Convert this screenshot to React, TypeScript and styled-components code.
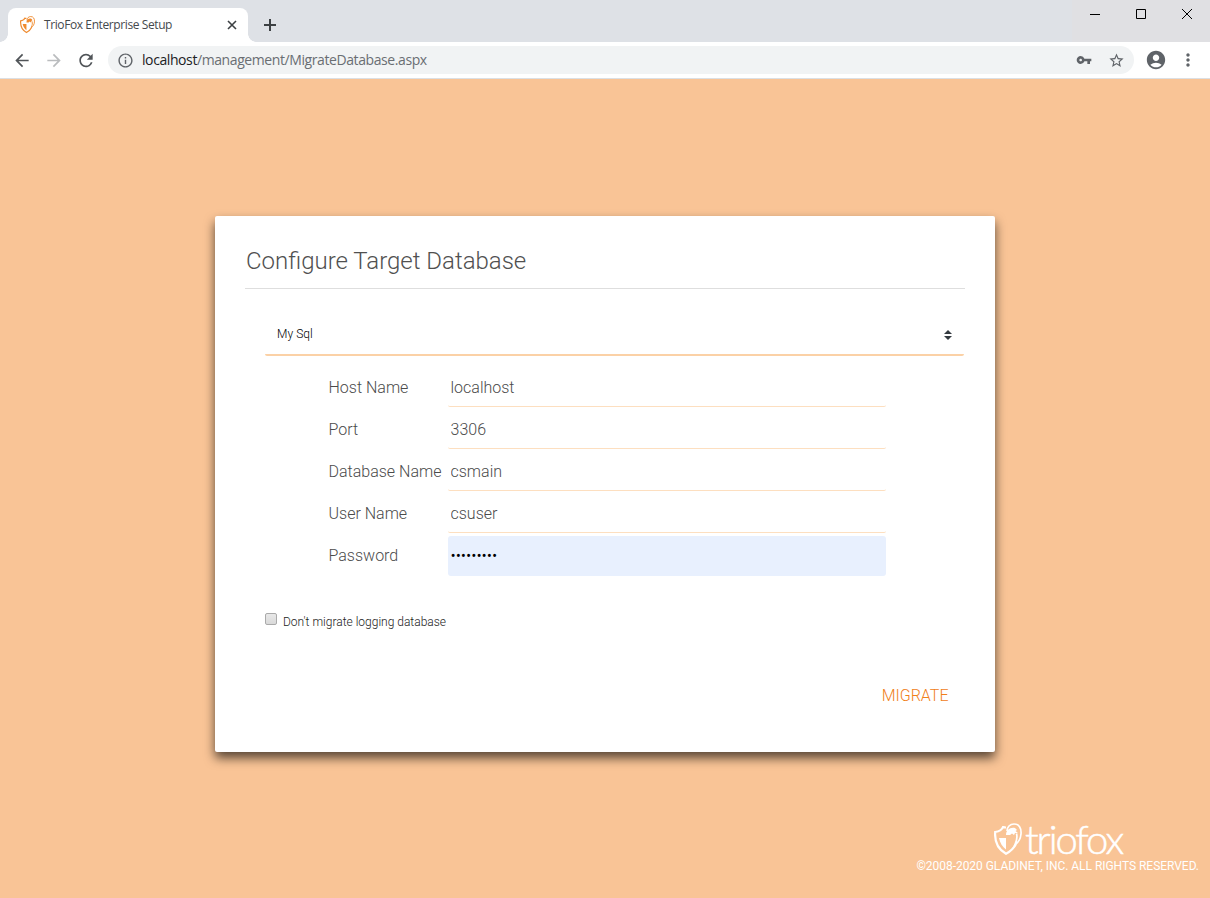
import React from 'react';
import styled, { createGlobalStyle } from 'styled-components';
import {
  MdArrowBack,
  MdArrowForward,
  MdRefresh,
  MdInfoOutline,
  MdVpnKey,
  MdStarBorder,
  MdAccountCircle,
  MdMoreVert,
} from 'react-icons/md';

const GlobalStyle = createGlobalStyle`
  *, *::before, *::after { box-sizing: border-box; }
  html, body { margin: 0; padding: 0; }
  body { font-family: Roboto, sans-serif; overflow: hidden; }
`;

const Window = styled.div`
  display: flex;
  flex-direction: column;
  width: 1210px;
  height: 898px;
  background: #f9c496;
`;

const TabStrip = styled.header`
  display: flex;
  height: 42px;
  padding-left: 8px;
  background: #dee1e6;
`;

const Tab = styled.div`
  position: relative;
  display: flex;
  align-items: center;
  width: 240px;
  height: 34px;
  margin-top: 8px;
  padding: 0 10px 0 12px;
  background: #fff;
  border-radius: 8px 8px 0 0;

  &::before,
  &::after {
    content: '';
    position: absolute;
    bottom: 0;
    width: 8px;
    height: 8px;
  }
  &::before {
    left: -8px;
    background: radial-gradient(circle at 0 0, transparent 7.5px, #fff 8px);
  }
  &::after {
    right: -8px;
    background: radial-gradient(circle at 100% 0, transparent 7.5px, #fff 8px);
  }
`;

const TabTitle = styled.span`
  flex: 1;
  margin-left: 9px;
  font: 400 12px/16px 'Open Sans', sans-serif;
  letter-spacing: -0.4px;
  color: #45494d;
  white-space: nowrap;
`;

const NewTab = styled.div`
  display: flex;
  align-items: center;
  margin: 8px 0 0 16px;
`;

const WindowControls = styled.div`
  display: flex;
  align-items: flex-start;
  width: 138px;
  height: 42px;
  margin-left: auto;
  background: #e0e0e3;
`;

const ControlButton = styled.div`
  display: flex;
  align-items: center;
  justify-content: center;
  width: 46px;
  height: 28px;
`;

const Toolbar = styled.nav`
  display: flex;
  align-items: center;
  height: 37px;
  padding: 0 12px;
  background: #fff;
  border-bottom: 1px solid #dcdfe3;
  color: #5f6368;
`;

const NavIcon = styled.span<{ $disabled?: boolean }>`
  display: flex;
  width: 20px;
  margin-right: 12px;
  color: ${(p) => (p.$disabled ? '#babcbe' : '#505458')};
`;

const AddressBar = styled.div`
  display: flex;
  align-items: center;
  width: 1026px;
  height: 28px;
  padding: 0 9px;
  border-radius: 14px;
  background: #f1f3f4;
`;

const Url = styled.span`
  flex: 1;
  margin-left: 8px;
  font: 400 14px/20px 'Open Sans', sans-serif;
  letter-spacing: -0.41px;
  color: #6a6e73;
`;

const UrlHost = styled.span`
  color: #202124;
`;

const StarSlot = styled.span`
  display: flex;
  margin-left: 16px;
`;

const ProfileSlot = styled.span`
  display: flex;
  margin: 0 11px;
`;

const Page = styled.main`
  display: flex;
  flex: 1;
  flex-direction: column;
  align-items: center;
  padding-top: 137px;
`;

const Card = styled.section`
  width: 780px;
  height: 536px;
  padding: 0 30px;
  background: #fff;
  border-radius: 2px;
  box-shadow: 0 6px 11px 0 rgba(0, 0, 0, 0.65);
`;

const Title = styled.h1`
  height: 73px;
  margin: 0;
  padding: 30px 0 0 1px;
  border-bottom: 1px solid #dedede;
  font-size: 24px;
  font-weight: 300;
  line-height: 30px;
  color: #505050;
`;

const DatabaseSelect = styled.div`
  display: flex;
  align-items: center;
  justify-content: space-between;
  width: 699px;
  height: 43px;
  margin: 24px 0 12px 20px;
  padding: 0 12px;
  border-bottom: 2px solid #fbd1a6;
  border-radius: 2px;
  font-size: 12px;
  font-weight: 300;
  letter-spacing: 0.05px;
  color: #000;
`;

const SortArrows = styled.svg`
  margin-top: 2px;
`;

const Fields = styled.div`
  display: flex;
  flex-direction: column;
  gap: 3px;
  margin-left: 83.5px;
`;

const FieldRow = styled.label`
  display: flex;
  font-size: 16px;
  font-weight: 300;
  color: #4b4b4b;
`;

const FieldLabel = styled.span`
  width: 119.5px;
  line-height: 39px;
`;

const FieldInput = styled.input<{ $filled?: boolean }>`
  width: 438px;
  height: ${(p) => (p.$filled ? 40 : 39)}px;
  padding: ${(p) => (p.$filled ? '0 2px 1px' : '0 2px 0')} 2.5px;
  border: 0;
  border-bottom: ${(p) => (p.$filled ? '0' : '1px solid #fddfc0')};
  border-radius: ${(p) => (p.$filled ? 3 : 2)}px;
  outline: 0;
  background: ${(p) => (p.$filled ? '#e8f0fe' : 'transparent')};
  font: 300 16px Roboto, sans-serif;
  color: ${(p) => (p.$filled ? '#000' : '#4b4b4b')};
`;

const LoggingOption = styled.label`
  display: flex;
  margin: 37px 0 0 20px;
  font-size: 12px;
  font-weight: 300;
  line-height: 18px;
  color: #222;
`;

const CheckSquare = styled.span`
  width: 12px;
  height: 12px;
  margin-right: 6px;
  border: 1px solid #aaa;
  border-radius: 2px;
  background: linear-gradient(#e8e8e8, #d9d9d9);
`;

const Actions = styled.div`
  display: flex;
  justify-content: flex-end;
  padding: 53px 16.5px 0 0;
`;

const MigrateButton = styled.button`
  padding: 0;
  border: 0;
  background: none;
  font: 300 16px/24px Roboto, sans-serif;
  color: #f0801a;
`;

const Footer = styled.footer`
  display: flex;
  flex-direction: column;
  align-self: flex-end;
  align-items: flex-end;
  width: 300px;
  margin-top: 70px;
  padding-right: 11px;
  color: #fff;
`;

const Brand = styled.div`
  display: flex;
  width: 205px;
  height: 36px;
  padding-top: 1px;
`;

const BrandName = styled.span`
  margin-left: 3px;
  font: 300 40px/32px Lato, sans-serif;
  letter-spacing: -2.1px;
  -webkit-text-stroke: 0.5px #fff;
`;

const Copyright = styled.span`
  font-size: 12px;
  letter-spacing: -0.04px;
  line-height: 16px;
  white-space: nowrap;
`;

const ShieldLogo = ({ size, color }: { size: number; color: string }) => (
  <svg width={size} height={(size * 32) / 28} viewBox="0 0 28 32" fill="none" stroke={color}>
    <path d="M12 4.5 C10 4.5 9.5 4 9 4 C8 7 5 8.5 1.2 9 C0.5 18 3.5 26 12 30.8 C17 28 20 25 22 21" strokeWidth="2.2" />
    <path d="M5 15 H12 V26.5 C8.5 24 6 20 5 15 Z" fill={color} stroke="none" />
    <path d="M13 8 C13 4 16 1 20 1 C25 1 27.5 5 27 11 C26.5 16 24.5 19.5 21 21.5 C23 17 23.5 14 22.5 10.5" strokeWidth="1.7" />
    <path d="M12 12 C12 7 16 4 21 5 L23 7 L21.5 8 L24 10 L21 10 L20 12 L18 10.5 L16 12 Z" fill={color} stroke="none" />
  </svg>
);

const fields = [
  { label: 'Host Name', value: 'localhost' },
  { label: 'Port', value: '3306' },
  { label: 'Database Name', value: 'csmain' },
  { label: 'User Name', value: 'csuser' },
  { label: 'Password', value: 'csuserpwd', secret: true },
];

export default function App() {
  return (
    <Window>
      <GlobalStyle />
      <TabStrip>
        <Tab>
          <ShieldLogo size={15} color="#ef8a2e" />
          <TabTitle>TrioFox Enterprise Setup</TabTitle>
          <svg width="12" height="12" viewBox="0 0 12 12" stroke="#3c4043" strokeWidth="1.6">
            <path d="M2 2 L10 10 M10 2 L2 10" />
          </svg>
        </Tab>
        <NewTab>
          <svg width="12" height="12" viewBox="0 0 12 12" stroke="#3c4043" strokeWidth="2">
            <path d="M6 0 V12 M0 6 H12" />
          </svg>
        </NewTab>
        <WindowControls>
          <ControlButton>
            <svg width="10" height="10" viewBox="0 0 10 10" stroke="#000">
              <path d="M0 5.5 H10" />
            </svg>
          </ControlButton>
          <ControlButton>
            <svg width="10" height="10" viewBox="0 0 10 10" stroke="#000" fill="none">
              <path d="M.5 .5 H9.5 V9.5 H.5 Z" />
            </svg>
          </ControlButton>
          <ControlButton>
            <svg width="10" height="10" viewBox="0 0 10 10" stroke="#000">
              <path d="M0 0 L10 10 M10 0 L0 10" />
            </svg>
          </ControlButton>
        </WindowControls>
      </TabStrip>
      <Toolbar>
        <NavIcon><MdArrowBack size={21} /></NavIcon>
        <NavIcon $disabled><MdArrowForward size={21} /></NavIcon>
        <NavIcon><MdRefresh size={21} /></NavIcon>
        <AddressBar>
          <MdInfoOutline size={17} />
          <Url><UrlHost>localhost</UrlHost>/management/MigrateDatabase.aspx</Url>
          <MdVpnKey size={16} />
          <StarSlot><MdStarBorder size={17} /></StarSlot>
        </AddressBar>
        <ProfileSlot><MdAccountCircle size={22} /></ProfileSlot>
        <MdMoreVert size={20} />
      </Toolbar>
      <Page>
        <Card>
          <Title>Configure Target Database</Title>
          <DatabaseSelect>
            My Sql
            <SortArrows width="8" height="10" viewBox="0 0 8 10" fill="#343a40">
              <path d="M4 0 L8 4 H0 Z M0 6 H8 L4 10 Z" />
            </SortArrows>
          </DatabaseSelect>
          <Fields>
            {fields.map((f) => (
              <FieldRow key={f.label}>
                <FieldLabel>{f.label}</FieldLabel>
                <FieldInput type={f.secret ? 'password' : 'text'} defaultValue={f.value} $filled={f.secret} />
              </FieldRow>
            ))}
          </Fields>
          <LoggingOption>
            <CheckSquare />
            Don't migrate logging database
          </LoggingOption>
          <Actions>
            <MigrateButton>MIGRATE</MigrateButton>
          </Actions>
        </Card>
        <Footer>
          <Brand>
            <ShieldLogo size={28} color="#fff" />
            <BrandName>triofox</BrandName>
          </Brand>
          <Copyright>©2008-2020 GLADINET, INC. ALL RIGHTS RESERVED.</Copyright>
        </Footer>
      </Page>
    </Window>
  );
}
